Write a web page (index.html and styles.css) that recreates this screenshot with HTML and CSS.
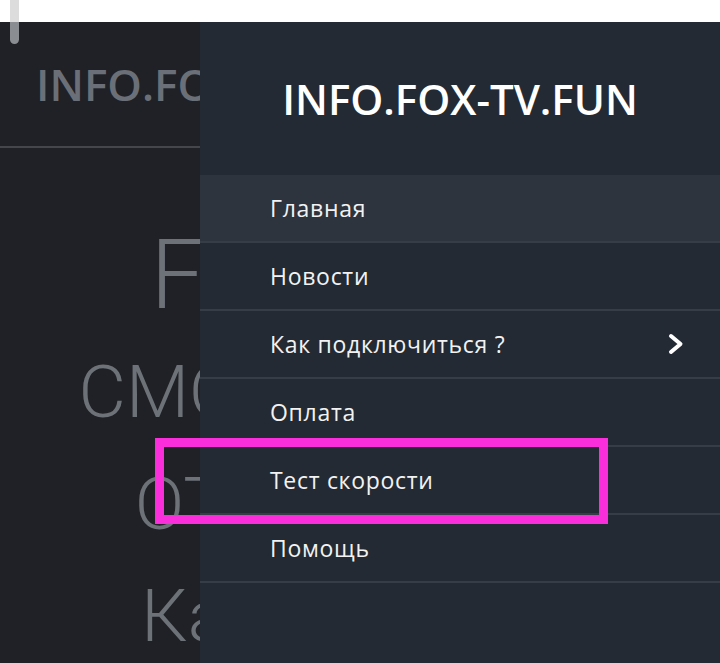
FILE: index.html
```html
<!DOCTYPE html>
<html>
    <head>
        <meta charset='utf-8'/>
        <title>INFO.FOX-TV.FUN</title>
        <link rel="stylesheet" href="styles.css">
    </head>
    <body>
        <div class="status-bar"></div>
        <div class="scroll-thumb"></div>

        <!-- страница под меню -->
        <div id="page">
            <header class="site-header">
                <span class="site-title">INFO.FOX-TV.FUN</span>
            </header>
            <section class="hero">
                <p class="hero-big">FOX-TV 1.</p>
                <p>СМОТРИТЕ ТВ 1!</p>
                <p>ОТ 100 Р.МЕС</p>
                <p>Каналы в HD</p>
            </section>
        </div>

        <nav id="drawer">
            <div class="drawer-title">INFO.FOX-TV.FUN</div>
            <ul class="menu">
                <li class="active"><a href="#">Главная</a></li>
                <li><a href="#">Новости</a></li>
                <li>
                    <a href="#">Как подключиться ?
                        <svg class="chevron" width="16" height="22" viewBox="0 0 16 22">
                            <polyline points="3,3 12.5,11 3,19" fill="none" stroke="#fff" stroke-width="4" stroke-linecap="round" stroke-linejoin="round"/>
                        </svg>
                    </a>
                </li>
                <li><a href="#">Оплата</a></li>
                <li><a href="#">Тест скорости</a></li>
                <li><a href="#">Помощь</a></li>
            </ul>
        </nav>

        <!-- выделение пункта -->
        <div class="mark"></div>
    </body>
</html>
```

FILE: styles.css
```css
* {
    margin: 0;
    padding: 0;
}

html, body {
    width: 720px;
    height: 663px;
    overflow: hidden;
}

body {
    position: relative;
    background: #1f2126;
    font-family: "Open Sans", "Liberation Sans", sans-serif;
}

.status-bar {
    height: 22px;
    background: #fff;
}

.scroll-thumb {
    position: absolute;
    left: 10px;
    top: 0;
    width: 9px;
    height: 44px;
    border-radius: 0 0 5px 5px;
    background: linear-gradient(#dcdcdc 0, #dcdcdc 22px, #8a8d91 22px);
    z-index: 30;
}

#page {
    height: 641px;
    overflow: hidden;
}

.site-header {
    height: 124px;
    display: flex;
    align-items: center;
    padding-left: 36px;
    border-bottom: 2px solid #44464b;
}

.site-title {
    color: #6b7078;
    font-size: 44px;
    font-weight: 600;
    white-space: nowrap;
}

.hero {
    text-align: center;
    font-family: Roboto, "Liberation Sans", sans-serif;
    font-weight: 300;
    color: #6d7178;
    font-size: 73px;
    line-height: 112px;
    white-space: nowrap;
    padding-top: 66px;
}

.hero .hero-big {
    font-size: 96px;
    line-height: 122px;
}

#drawer {
    position: absolute;
    left: 200px;
    top: 22px;
    right: 0;
    bottom: 0;
    background: #232a33;
    z-index: 10;
}

.drawer-title {
    height: 153px;
    display: flex;
    align-items: center;
    justify-content: center;
    color: #fff;
    font-size: 42px;
    font-weight: 600;
}

.menu {
    list-style: none;
}

.menu li {
    border-bottom: 2px solid #363d46;
}

.menu li.active {
    background: #2d343d;
}

.menu a {
    height: 66px;
    display: flex;
    align-items: center;
    justify-content: space-between;
    padding: 0 36px 0 70px;
    color: #f2f2f2;
    font-size: 23px;
    letter-spacing: 0.7px;
    text-decoration: none;
}

.chevron {
    display: block;
}

.mark {
    position: absolute;
    left: 155px;
    top: 438px;
    width: 435px;
    height: 68px;
    border: 9px solid #fb2edc;
    z-index: 20;
}
```
